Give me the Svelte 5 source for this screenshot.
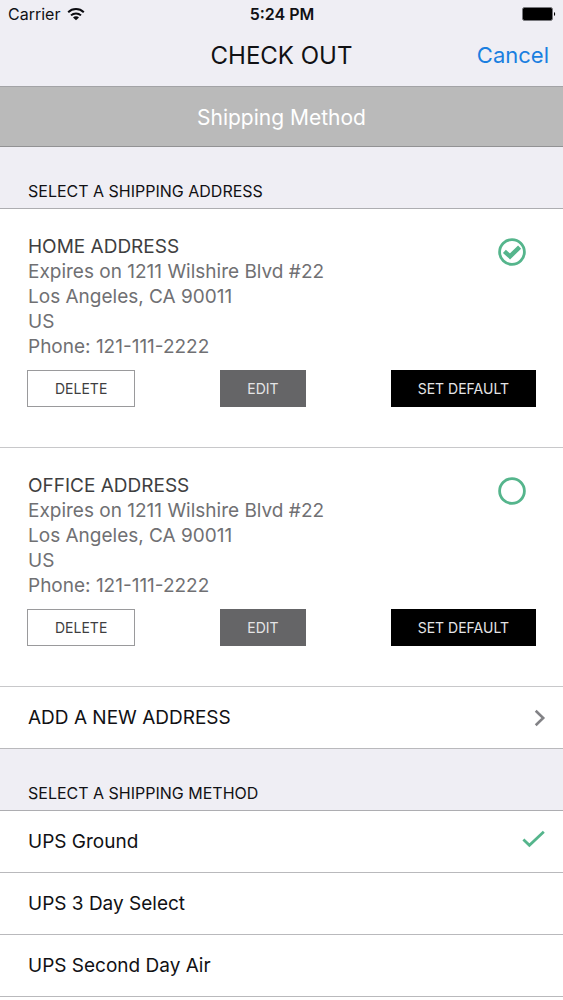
<script>
  const addresses = [
    { id: 'home', title: 'HOME ADDRESS' },
    { id: 'office', title: 'OFFICE ADDRESS' }
  ];
  const lines = ['Expires on 1211 Wilshire Blvd #22', 'Los Angeles, CA 90011', 'US', 'Phone: 121-111-2222'];
  const methods = ['UPS Ground', 'UPS 3 Day Select', 'UPS Second Day Air'];

  let address = $state('home');
  let method = $state('UPS Ground');
</script>

<div class="screen">
  <header>
    <div class="status">
      <div class="carrier">
        <span>Carrier</span>
        <svg width="18" height="14" viewBox="0 0 18 14" aria-hidden="true">
          <g fill="none" stroke="#0b0b10" stroke-width="2">
            <path d="M1.2 5.2a11.2 11.2 0 0 1 15.6 0" />
            <path d="M4 8.4a7.2 7.2 0 0 1 10 0" />
          </g>
          <path d="M9 13.2 6 10.4a4.2 4.2 0 0 1 6 0z" fill="#0b0b10" />
        </svg>
      </div>
      <time>5:24 PM</time>
      <svg class="battery" width="34" height="14" viewBox="0 0 34 14" aria-hidden="true">
        <rect x="0.5" y="0.5" width="30" height="13" rx="2" fill="#000" stroke="#77777c" />
        <path d="M32 5c1.6.6 1.6 3.4 0 4z" fill="#000" />
      </svg>
    </div>
    <nav>
      <h1>CHECK OUT</h1>
      <button class="cancel" type="button">Cancel</button>
    </nav>
  </header>

  <div class="banner">Shipping Method</div>

  <main>
    <h2>SELECT A SHIPPING ADDRESS</h2>
    {#each addresses as item (item.id)}
      <section class="card">
        <label class="address">
          <span class="text">
            <span class="title">{item.title}</span>
            {#each lines as line}
              <span class="line">{line}</span>
            {/each}
          </span>
          <input type="radio" name="address" value={item.id} bind:group={address} />
          <svg class="ring" width="28" height="28" viewBox="0 0 28 28" aria-hidden="true">
            <circle cx="14" cy="14" r="12.4" fill="none" stroke="#55b58c" stroke-width="2.8" />
            {#if address === item.id}
              <path d="M6.4 13.4 12 18.4 21.6 9.2" fill="none" stroke="#55b58c" stroke-width="4.4" />
            {/if}
          </svg>
        </label>
        <div class="actions">
          <button class="delete" type="button">DELETE</button>
          <button class="edit" type="button">EDIT</button>
          <button class="default" type="button">SET DEFAULT</button>
        </div>
      </section>
    {/each}
    <button class="row add" type="button">
      <span>ADD A NEW ADDRESS</span>
      <svg width="12" height="18" viewBox="0 0 12 18" aria-hidden="true">
        <path d="M1.7 1.7 9.2 9 1.7 16.3" fill="none" stroke="#828286" stroke-width="2.6" />
      </svg>
    </button>

    <h2>SELECT A SHIPPING METHOD</h2>
    {#each methods as name}
      <label class="row method">
        <span>{name}</span>
        <input type="radio" name="method" value={name} bind:group={method} />
        {#if method === name}
          <svg width="24" height="24" viewBox="0 0 24 24" aria-hidden="true">
            <path d="M1.4 9.4 7.4 15.2 21.8 1.8" fill="none" stroke="#55b58c" stroke-width="2.8" />
          </svg>
        {/if}
      </label>
    {/each}
  </main>
</div>

<style>
  :global(body) {
    margin: 0;
    background: #fff;
  }

  .screen {
    font-family: Inter, 'Liberation Sans', sans-serif;
    font-size: 19px;
    color: #111114;
    background: #efeef4;
  }

  button {
    font: inherit;
    color: inherit;
    border: 0;
    border-radius: 0;
    cursor: pointer;
  }

  header {
    border-bottom: 1px solid #a3a3a6;
  }

  .status,
  nav {
    display: grid;
    grid-template-columns: 1fr auto 1fr;
    align-items: center;
  }

  .status {
    height: 28px;
    padding: 0 7px 0 8px;
    font-size: 16px;
  }

  .carrier {
    display: flex;
    align-items: center;
    gap: 7px;
  }

  time {
    font-weight: 600;
  }

  .battery {
    justify-self: end;
  }

  nav {
    height: 54px;
    padding: 0 14px 4px;
  }

  h1 {
    grid-column: 2;
    margin: 0;
    font-size: 24px;
    font-weight: 400;
  }

  .cancel {
    justify-self: end;
    padding: 0;
    background: none;
    font-size: 22px;
    color: #1a7fe0;
  }

  .banner {
    padding: 16px 15px 14px;
    border-bottom: 1px solid #929294;
    background: #bababa;
    color: #fff;
    font-size: 21px;
    line-height: 29px;
    text-align: center;
  }

  h2 {
    margin: 0;
    padding: 34px 28px 7px;
    border-bottom: 1px solid #adadb1;
    font-size: 16px;
    font-weight: 400;
    line-height: 20px;
  }

  .card {
    padding: 26px 27px 40px;
    border-bottom: 1px solid #c8c8ca;
    background: #fff;
  }

  .address {
    position: relative;
    display: flex;
    justify-content: space-between;
    padding: 0 10px 0 1px;
  }

  .text {
    display: flex;
    flex-direction: column;
  }

  .title {
    color: #3e3e40;
    line-height: 24px;
  }

  .line {
    color: #707073;
    line-height: 25px;
  }

  input {
    position: absolute;
    right: 10px;
    width: 28px;
    height: 28px;
    margin: 0;
    appearance: none;
    cursor: pointer;
  }

  .ring {
    margin-top: 3px;
  }

  .actions {
    display: flex;
    justify-content: space-between;
    padding-top: 11px;
  }

  .actions button {
    height: 37px;
    padding: 0 27px;
    font-size: 14px;
  }

  .actions .delete {
    border: 1px solid #9a9a9c;
    background: #fff;
    color: #3e3e40;
  }

  .actions .edit {
    background: #656567;
    color: #e4e4e6;
  }

  .actions .default {
    background: #000;
    color: #e4e4e6;
  }

  .row {
    position: relative;
    display: flex;
    align-items: center;
    justify-content: space-between;
    box-sizing: border-box;
    width: 100%;
    min-height: 62px;
    padding: 0 17px 0 28px;
    border-bottom: 1px solid #b9b9bc;
    background: #fff;
    text-align: left;
  }
</style>
